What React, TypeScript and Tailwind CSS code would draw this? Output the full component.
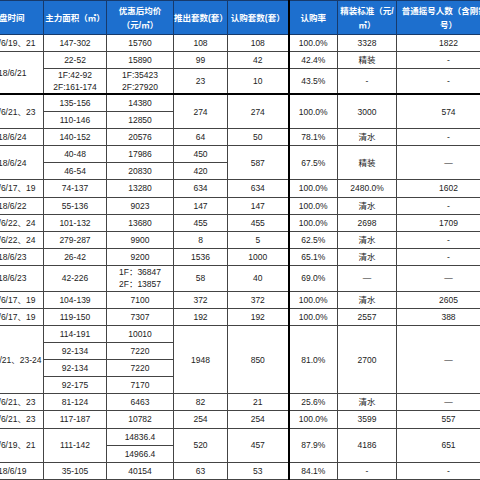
import type { ReactNode } from 'react';

// 单元格
function Td({ children, rs, tall, thick }: { children?: ReactNode; rs?: number; tall?: boolean; thick?: boolean }) {
  return (
    <td
      rowSpan={rs}
      className={
        'border border-[#444] text-center align-middle whitespace-nowrap p-0 leading-[12px] ' +
        (thick ? 'border-l-2 border-l-black ' : '') +
        (tall ? 'leading-[12.5px]' : '')
      }
    >
      {children}
    </td>
  );
}

function Th({ children, thick }: { children: ReactNode; thick?: boolean }) {
  return (
    <th
      className={
        'border border-[#173a6b] bg-[#1d6fce] text-white font-bold text-center align-middle px-0 whitespace-nowrap leading-[14px] ' +
        (thick ? 'border-l-2 border-l-black' : '')
      }
    >
      {children}
    </th>
  );
}

const R = 'h-[17.13px]';
const T = 'h-[25.5px]';

export default function App() {
  return (
    <div className="w-[480px] h-[480px] overflow-hidden bg-white">
      <table
        className="table-fixed border-collapse ml-[-29px] w-[529px] text-[8.5px] text-[#222]"
        style={{ fontFamily: '"Liberation Sans", "Noto Sans CJK SC", sans-serif' }}
      >
        <colgroup>
          <col className="w-[72px]" />
          <col className="w-[63px]" />
          <col className="w-[67px]" />
          <col className="w-[54px]" />
          <col className="w-[61px]" />
          <col className="w-[49px]" />
          <col className="w-[59px]" />
          <col className="w-[104px]" />
        </colgroup>
        <thead>
          <tr className="h-[34px]">
            <Th>开盘时间</Th>
            <Th>主力面积（㎡）</Th>
            <Th>
              优惠后均价
              <br />
              （元/㎡）
            </Th>
            <Th>推出套数(套）</Th>
            <Th>认购套数(套）</Th>
            <Th thick>认购率</Th>
            <Th>
              精装标准（元/
              <br />
              ㎡）
            </Th>
            <Th>
              普通摇号人数（含刚需二
              <br />
              号）
            </Th>
          </tr>
        </thead>
        <tbody>
          <tr className={R}>
            <Td>2018/6/19、21</Td><Td>147-302</Td><Td>15760</Td><Td>108</Td><Td>108</Td><Td thick>100.0%</Td><Td>3328</Td><Td>1822</Td>
          </tr>
          <tr className={R}>
            <Td rs={2}>2018/6/21</Td><Td>22-52</Td><Td>15890</Td><Td>99</Td><Td>42</Td><Td thick>42.4%</Td><Td>精装</Td><Td>-</Td>
          </tr>
          <tr className={T}>
            <Td tall>1F:42-92<br />2F:161-174</Td><Td tall>1F:35423<br />2F:27920</Td><Td>23</Td><Td>10</Td><Td thick>43.5%</Td><Td>-</Td><Td>-</Td>
          </tr>
          <tr className={R + ' border-t-2 border-t-black'}>
            <Td rs={2}>2018/6/21、23</Td><Td>135-156</Td><Td>14380</Td><Td rs={2}>274</Td><Td rs={2}>274</Td><Td rs={2} thick>100.0%</Td><Td rs={2}>3000</Td><Td rs={2}>574</Td>
          </tr>
          <tr className={R}>
            <Td>110-146</Td><Td>12850</Td>
          </tr>
          <tr className={R}>
            <Td>2018/6/24</Td><Td>140-152</Td><Td>20576</Td><Td>64</Td><Td>50</Td><Td thick>78.1%</Td><Td>清水</Td><Td>-</Td>
          </tr>
          <tr className={R}>
            <Td rs={2}>2018/6/24</Td><Td>40-48</Td><Td>17986</Td><Td>450</Td><Td rs={2}>587</Td><Td rs={2} thick>67.5%</Td><Td rs={2}>精装</Td><Td rs={2}>—</Td>
          </tr>
          <tr className={R}>
            <Td>46-54</Td><Td>20830</Td><Td>420</Td>
          </tr>
          <tr className={R}>
            <Td>2018/6/17、19</Td><Td>74-137</Td><Td>13280</Td><Td>634</Td><Td>634</Td><Td thick>100.0%</Td><Td>2480.0%</Td><Td>1602</Td>
          </tr>
          <tr className={R}>
            <Td>2018/6/22</Td><Td>55-136</Td><Td>9023</Td><Td>147</Td><Td>147</Td><Td thick>100.0%</Td><Td>清水</Td><Td>-</Td>
          </tr>
          <tr className={R}>
            <Td>2018/6/22、24</Td><Td>101-132</Td><Td>13680</Td><Td>455</Td><Td>455</Td><Td thick>100.0%</Td><Td>2698</Td><Td>1709</Td>
          </tr>
          <tr className={R}>
            <Td>2018/6/22、24</Td><Td>279-287</Td><Td>9900</Td><Td>8</Td><Td>5</Td><Td thick>62.5%</Td><Td>清水</Td><Td>-</Td>
          </tr>
          <tr className={R}>
            <Td>2018/6/23</Td><Td>26-42</Td><Td>9200</Td><Td>1536</Td><Td>1000</Td><Td thick>65.1%</Td><Td>清水</Td><Td>-</Td>
          </tr>
          <tr className={T}>
            <Td>2018/6/23</Td><Td>42-226</Td><Td tall>1F：36847<br />2F：13857</Td><Td>58</Td><Td>40</Td><Td thick>69.0%</Td><Td>—</Td><Td>—</Td>
          </tr>
          <tr className={R}>
            <Td>2018/6/17、19</Td><Td>104-139</Td><Td>7100</Td><Td>372</Td><Td>372</Td><Td thick>100.0%</Td><Td>清水</Td><Td>2605</Td>
          </tr>
          <tr className={R}>
            <Td>2018/6/17、19</Td><Td>119-150</Td><Td>7307</Td><Td>192</Td><Td>192</Td><Td thick>100.0%</Td><Td>2557</Td><Td>388</Td>
          </tr>
          <tr className={R}>
            <Td rs={4}>2018/6/21、23-24</Td><Td>114-191</Td><Td>10010</Td><Td rs={4}>1948</Td><Td rs={4}>850</Td><Td rs={4} thick>81.0%</Td><Td rs={4}>2700</Td><Td rs={4}>—</Td>
          </tr>
          <tr className={R}>
            <Td>92-134</Td><Td>7220</Td>
          </tr>
          <tr className={R}>
            <Td>92-134</Td><Td>7220</Td>
          </tr>
          <tr className={R}>
            <Td>92-175</Td><Td>7170</Td>
          </tr>
          <tr className={R}>
            <Td>2018/6/21、23</Td><Td>81-124</Td><Td>6463</Td><Td>82</Td><Td>21</Td><Td thick>25.6%</Td><Td>清水</Td><Td>—</Td>
          </tr>
          <tr className={R}>
            <Td>2018/6/21、23</Td><Td>117-187</Td><Td>10782</Td><Td>254</Td><Td>254</Td><Td thick>100.0%</Td><Td>3599</Td><Td>557</Td>
          </tr>
          <tr className={R}>
            <Td rs={2}>2018/6/19、21</Td><Td rs={2}>111-142</Td><Td>14836.4</Td><Td rs={2}>520</Td><Td rs={2}>457</Td><Td rs={2} thick>87.9%</Td><Td rs={2}>4186</Td><Td rs={2}>651</Td>
          </tr>
          <tr className={R}>
            <Td>14966.4</Td>
          </tr>
          <tr className={R}>
            <Td>2018/6/19</Td><Td>35-105</Td><Td>40154</Td><Td>63</Td><Td>53</Td><Td thick>84.1%</Td><Td>-</Td><Td>-</Td>
          </tr>
        </tbody>
      </table>
    </div>
  );
}
